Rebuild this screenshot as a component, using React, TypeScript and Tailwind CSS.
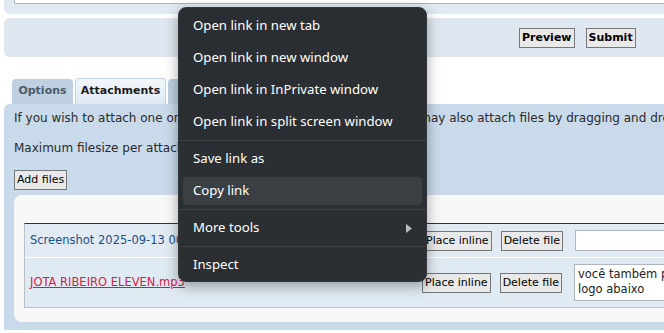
import React from "react";

const menuFont = { fontFamily: '"Noto Sans", "Open Sans", sans-serif' };

function Item({ label, active, arrow }: { label: string; active?: boolean; arrow?: boolean }) {
  return (
    <div className="h-[32px] px-[4px] py-[2px]">
      <div
        className={`h-[28px] rounded-[4px] flex items-center pl-[10px] pr-[10px] justify-between ${active ? "bg-[#3a3f44]" : ""}`}
      >
        <span className="text-[13.2px] text-white leading-none">{label}</span>
        {arrow && (
          <svg width="6" height="9" viewBox="0 0 6 9">
            <path d="M0 0 L6 4.5 L0 9 Z" fill="#b8bcc0" />
          </svg>
        )}
      </div>
    </div>
  );
}

function Sep() {
  return <div className="h-[1px] bg-[#3e4246] my-[2px]" />;
}

function Btn({ children, bold }: { children: React.ReactNode; bold?: boolean }) {
  return (
    <button
      className={`h-[20px] px-[2px] bg-[#e9e9e9] border border-[#767676] text-black text-[11px] leading-none ${bold ? "font-bold h-[19px]" : ""}`}
    >
      {children}
    </button>
  );
}

export default function App() {
  return (
    <div
      className="w-[664px] h-[333px] overflow-hidden relative bg-white"
      style={{ fontFamily: '"DejaVu Sans", Verdana, sans-serif' }}
    >
      {/* top panel */}
      <div className="ml-[4px] w-[720px] h-[14px] bg-[#e1eaf2] rounded-bl-[6px] pl-[10px]">
        <div className="h-[4px] bg-white border-b border-l border-[#a9b1b9] rounded-bl-[2px]" />
      </div>

      {/* button panel */}
      <div className="ml-[4px] mt-[4px] w-[720px] h-[39px] bg-[#dfe8f0] rounded-l-[6px] flex items-center pl-[515px] gap-[11px]">
        <Btn bold>Preview</Btn>
        <Btn bold>Submit</Btn>
      </div>

      {/* tabs */}
      <div className="mt-[21px] ml-[12px] flex items-end gap-[2px] h-[26px]">
        <div className="w-[61px] h-[25px] bg-[#bfd1e0] rounded-t-[4px] flex items-center justify-center text-[11px] font-bold text-[#4b5c6d]">
          Options
        </div>
        <div className="w-[91px] h-[26px] bg-gradient-to-b from-[#f3f7fb] to-[#dfe9f3] border border-b-0 border-[#c3d3e2] rounded-t-[4px] flex items-center justify-center text-[11px] font-bold text-[#1c1c1c]">
          Attachments
        </div>
        <div className="w-[60px] h-[25px] bg-[#bfd1e0] rounded-t-[4px]" />
      </div>

      {/* content panel */}
      <div className="ml-[4px] w-[720px] h-[226px] bg-[#c9daea] rounded-tl-[6px] pl-[10px] pt-[6px]">
        <div className="text-[12px] text-[#2a2a2a] leading-[16px] whitespace-nowrap">
          If you wish to attach one or more files, enter the details below. You may also attach files by dragging and dropping them.
        </div>
        <div className="mt-[14px] text-[12px] text-[#2a2a2a] leading-[16px] whitespace-nowrap">
          Maximum filesize per attachment: 8 MiB.
        </div>
        <div className="mt-[10px] h-[20px]">
          <button className="h-[20px] px-[2px] bg-[#e9e9e9] border border-[#767676] text-black text-[11px] leading-none">
            Add files
          </button>
        </div>
        <div className="mt-[9px] w-[720px] h-[127px] bg-[#f8f8f8] rounded-tl-[8px] rounded-bl-[8px] pl-[10px] pt-[28px]">
          <div className="w-[700px] border-t border-[#333] border-l border-b border-l-[#b7bfc7] border-b-[#b7bfc7]">
            <div className="h-[34px] bg-[#e2ebf3] flex items-center border-b border-white">
              <div className="w-[398px] pl-[5px] text-[11.5px] text-[#1b4f88] whitespace-nowrap">
                Screenshot 2025-09-13 002345.png
              </div>
              <div className="flex items-center gap-[9px]">
                <Btn>Place inline</Btn>
                <Btn>Delete file</Btn>
                <div className="ml-[3px] w-[100px] h-[21px] bg-white border border-[#adb5bd]" />
              </div>
            </div>
            <div className="h-[49px] bg-[#e0eaf2] flex items-center">
              <div className="w-[397px] pl-[5px] text-[11.5px] text-[#d41b4b] underline whitespace-nowrap">
                JOTA RIBEIRO ELEVEN.mp3
              </div>
              <div className="flex items-center gap-[9px]">
                <Btn>Place inline</Btn>
                <Btn>Delete file</Btn>
                <div className="ml-[3px] w-[100px] h-[37px] bg-white border border-[#adb5bd] px-[3px] pt-[2px] text-[11.5px] leading-[15px] text-[#222] whitespace-nowrap overflow-hidden">
                  você também pode
                  <br />
                  logo abaixo
                </div>
              </div>
            </div>
          </div>
        </div>
      </div>

      {/* context menu */}
      <div
        className="absolute left-[178px] top-[7px] w-[249px] h-[275px] rounded-[8px] bg-gradient-to-b from-[#2a2e33] to-[#2c2f32] shadow-[0_4px_14px_rgba(0,0,0,0.35)] border border-[#33373b] pt-[2px]"
        style={menuFont}
      >
        <Item label="Open link in new tab" />
        <Item label="Open link in new window" />
        <Item label="Open link in InPrivate window" />
        <Item label="Open link in split screen window" />
        <Sep />
        <Item label="Save link as" />
        <Item label="Copy link" active />
        <Sep />
        <Item label="More tools" arrow />
        <Sep />
        <Item label="Inspect" />
      </div>
    </div>
  );
}
